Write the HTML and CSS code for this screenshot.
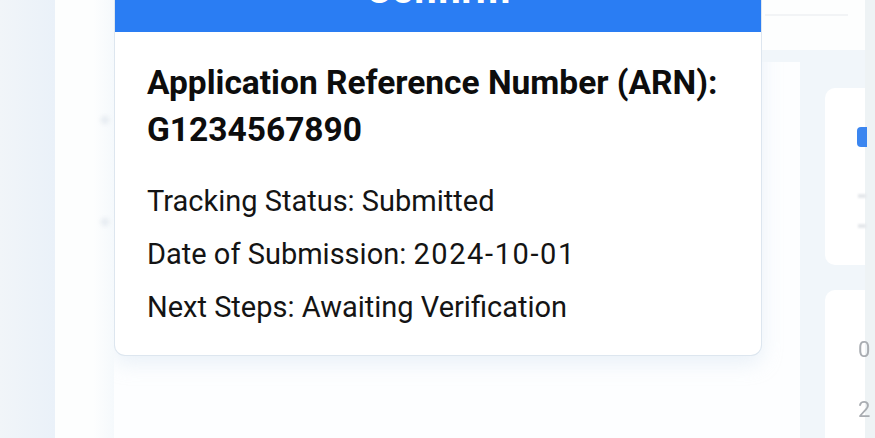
FILE: index.html
```html
<!DOCTYPE html>
<html lang="en">
<head>
<meta charset="utf-8">
<title>Application Confirmation</title>
<link rel="stylesheet" href="styles.css">
</head>
<body>
<div class="app">
  <div class="rail"></div>
  <main class="panel">
    <div class="gutter">
      <span class="blip blip-1"></span>
      <span class="blip blip-2"></span>
    </div>
    <section class="card">
      <header class="card-head"><span class="card-title">Confirm</span></header>
      <div class="card-body">
        <h1 class="arn">Application Reference Number (ARN): G1234567890</h1>
        <p class="info">Tracking Status: Submitted</p>
        <p class="info">Date of Submission: <span class="num">2024-10-01</span></p>
        <p class="info">Next Steps: Awaiting Verification</p>
      </div>
    </section>
    <aside class="side">
      <div class="side-top"><span class="side-rule"></span></div>
      <div class="side-col">
        <div class="mini-card mini-1">
          <span class="mini-icon"></span>
          <span class="mini-line"></span>
          <span class="mini-line short"></span>
        </div>
        <div class="mini-card mini-2">
          <span class="mini-num">0</span>
          <span class="mini-num">2</span>
        </div>
      </div>
    </aside>
  </main>
  <div class="edge"></div>
</div>
</body>
</html>
```
FILE: styles.css
```css
* { box-sizing: border-box; }
html, body { margin: 0; padding: 0; }
body {
  width: 875px;
  height: 438px;
  overflow: hidden;
  background: #eef3f8;
  font-family: Roboto, "Liberation Sans", sans-serif;
  color: #111;
}
.app {
  display: flex;
  height: 438px;
}
.rail {
  width: 55px;
  flex: none;
  background: linear-gradient(90deg, #f1f5f9 0%, #eaf1f9 100%);
}
.panel {
  width: 810px;
  flex: none;
  display: grid;
  grid-template-columns: 59px 648px 103px;
  background: #fdfeff;
  height: 438px;
}
.edge {
  flex: 1;
  background: #eef3f5;
}
.gutter {
  position: relative;
  background: linear-gradient(90deg, #fdfefe 0%, #fdfefe 65%, #f5f9fc 100%);
}
.blip {
  position: absolute;
  left: 46px;
  width: 8px;
  height: 8px;
  border-radius: 50%;
  background: #e6ebf1;
  filter: blur(2px);
}
.blip-1 { top: 116px; }
.blip-2 { top: 218px; }

.card {
  align-self: start;
  background: #ffffff;
  border: 1px solid #dde6ef;
  border-top: none;
  border-radius: 0 0 11px 11px;
  box-shadow: 0 8px 20px rgba(200, 218, 236, 0.35);
  overflow: hidden;
}
.card-head {
  height: 32px;
  background: #2a7df3;
  overflow: hidden;
  text-align: center;
}
.card-title {
  display: block;
  margin-top: -32px;
  color: #ffffff;
  font-weight: 700;
  font-size: 40px;
  line-height: 44px;
}
.card-body {
  padding: 27px 32px 21px;
}
.arn {
  margin: 0 0 22px;
  font-size: 33.5px;
  font-weight: 700;
  line-height: 47px;
  color: #0d0d0d;
}
.info {
  margin: 0;
  font-size: 29px;
  line-height: 53px;
  color: #141414;
}
.num {
  letter-spacing: 1.6px;
}

.side {
  display: flex;
  flex-direction: column;
}
.side-top {
  height: 62px;
  background: #fdfefe;
  border-bottom: 12px solid #f1f6fa;
  padding: 14px 17px 0 3px;
}
.side-rule {
  display: block;
  height: 2px;
  background: #f2f4f6;
}
.side-col {
  flex: 1;
  margin-left: 38px;
  background: #f1f6fa;
  padding: 26px 0 0 25px;
  display: flex;
  flex-direction: column;
  gap: 25px;
}
.mini-card {
  background: #ffffff;
  border-radius: 10px 0 0 10px;
  position: relative;
}
.mini-1 { height: 177px; flex: none; }
.mini-2 { flex: 1; border-radius: 10px 0 0 0; padding: 30px 0 0 33px; }
.mini-icon {
  position: absolute;
  left: 32px;
  top: 39px;
  width: 10px;
  height: 20px;
  border-radius: 4px 0 0 4px;
  background: #3b86f0;
  filter: blur(0.6px);
}
.mini-line {
  position: absolute;
  left: 33px;
  top: 106px;
  width: 8px;
  height: 4px;
  background: #e4e7eb;
  filter: blur(0.8px);
}
.mini-line.short { top: 136px; }
.mini-num {
  display: block;
  font-size: 22px;
  line-height: 60px;
  color: #a9adb2;
  filter: blur(0.6px);
}
```
